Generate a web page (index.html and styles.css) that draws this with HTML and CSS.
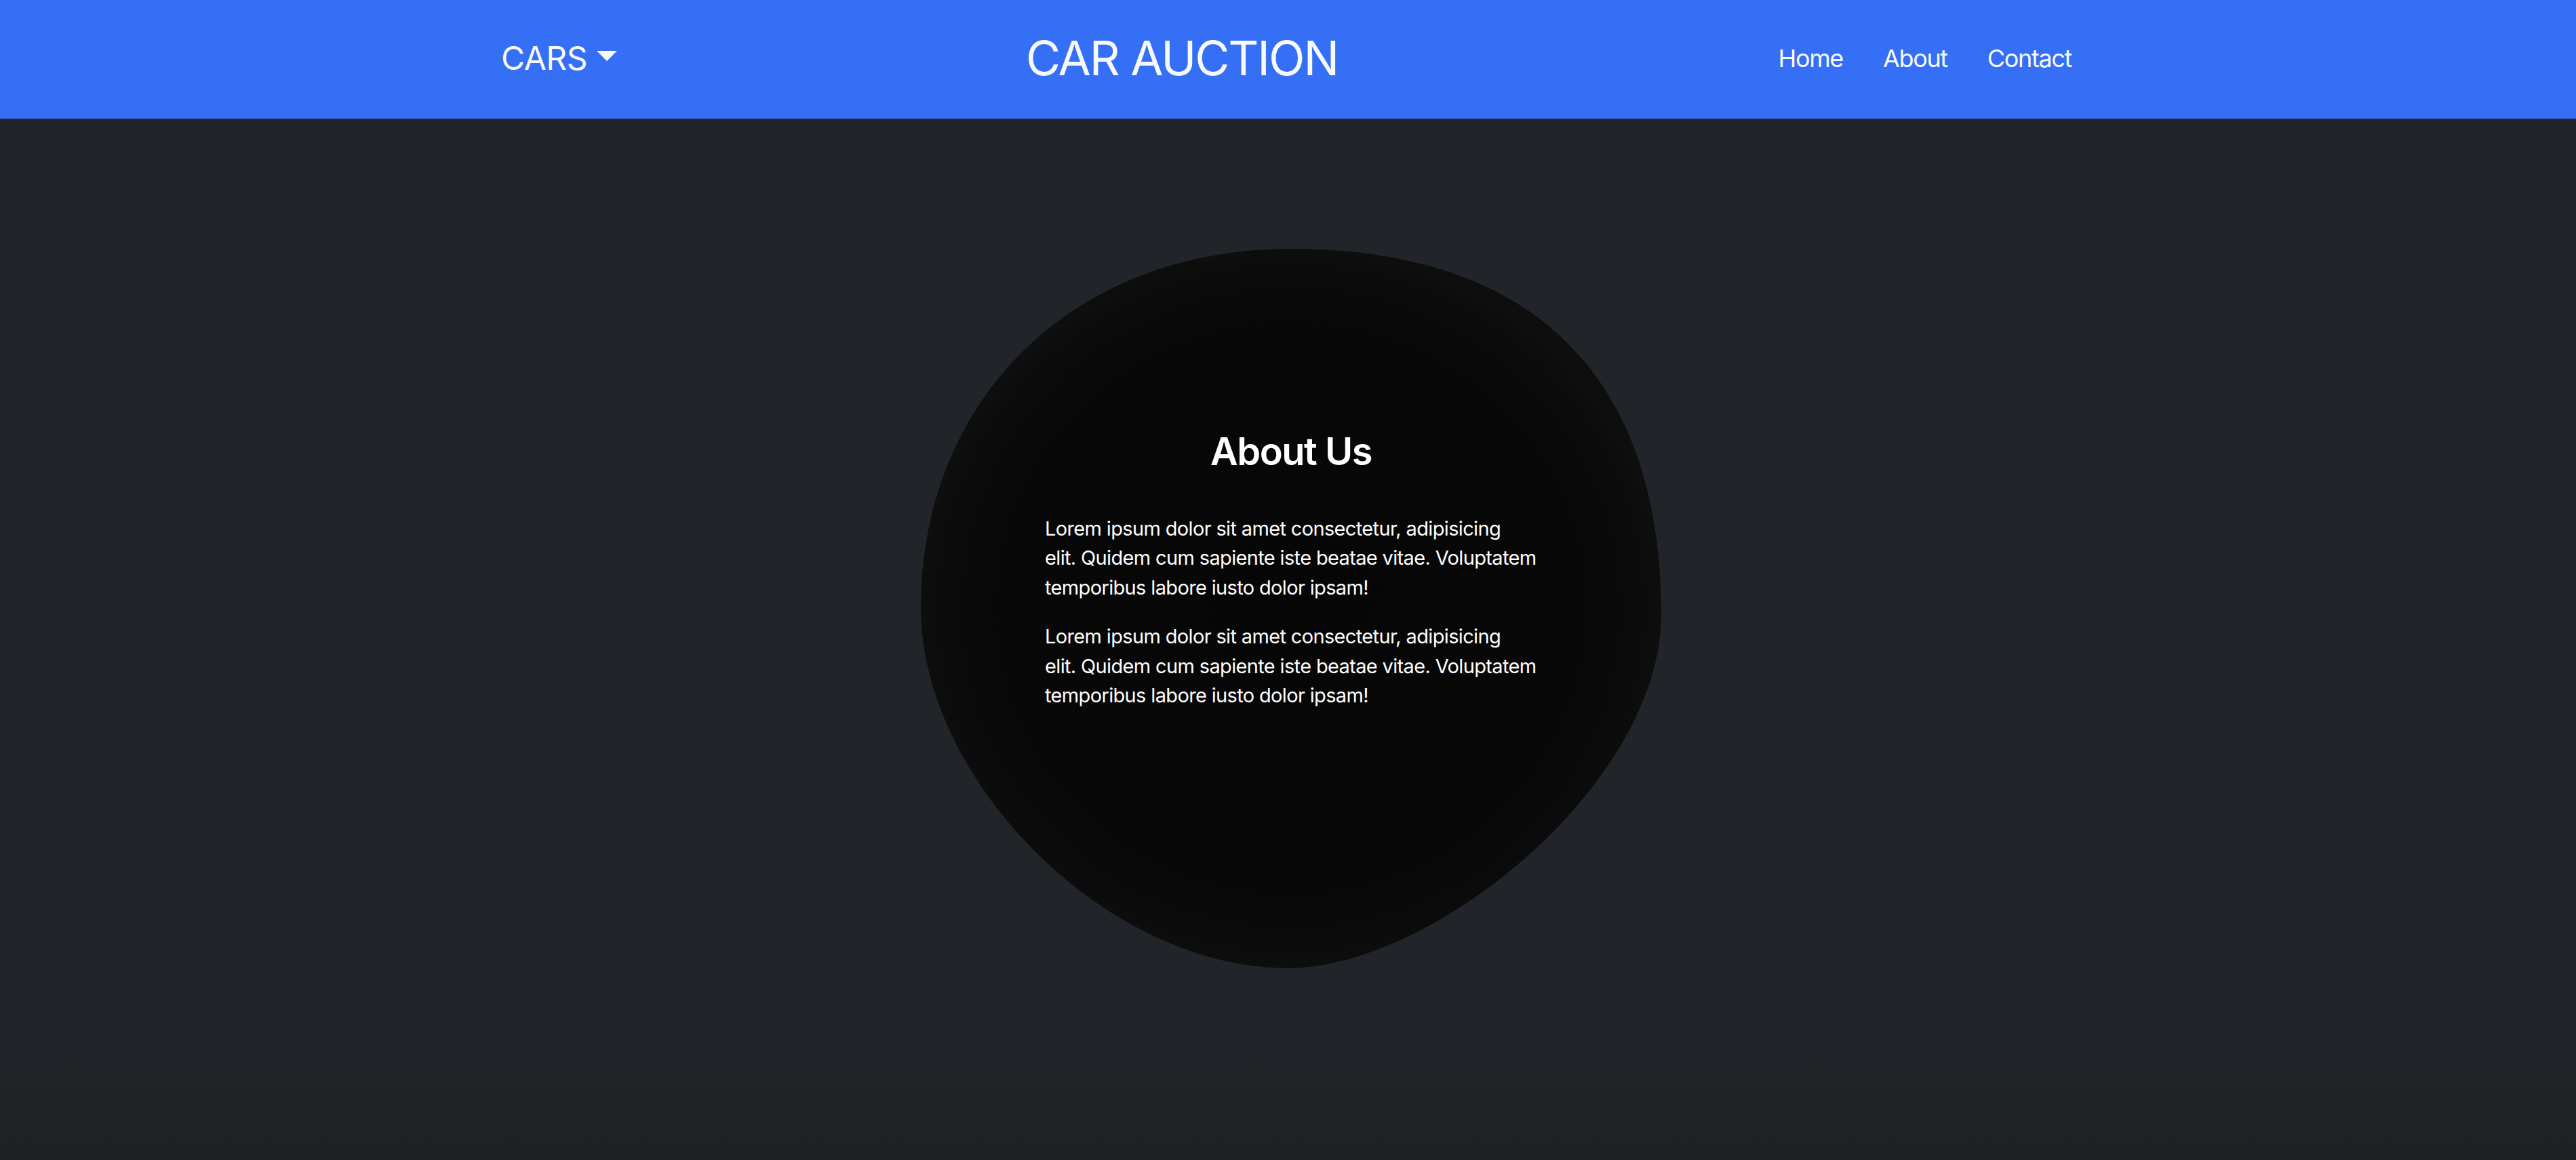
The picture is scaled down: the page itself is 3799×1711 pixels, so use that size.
FILE: index.html
```html
<!DOCTYPE html>
<html lang="en">
<head>
<meta charset="utf-8">
<title>Car Auction - About</title>
<link rel="stylesheet" href="styles.css">
</head>
<body>
<header class="navbar">
  <div class="nav-inner">
    <a class="brand" href="#">CARS<span class="caret"></span></a>
    <h1 class="title">CAR AUCTION</h1>
    <nav class="links">
      <a class="nav-link" href="#">Home</a>
      <a class="nav-link" href="#">About</a>
      <a class="nav-link" href="#">Contact</a>
    </nav>
  </div>
</header>
<main class="page">
  <section class="blob">
    <svg class="blob-bg" viewBox="0 0 1092 1061" preserveAspectRatio="none" aria-hidden="true">
      <defs>
        <radialGradient id="blobFill" cx="0.5" cy="0.5" r="0.5">
          <stop offset="0" stop-color="#060606"/>
          <stop offset="0.78" stop-color="#080808"/>
          <stop offset="0.94" stop-color="#0b0b0b"/>
          <stop offset="1" stop-color="#0e0e0f"/>
        </radialGradient>
      </defs>
      <path fill="url(#blobFill)" d="M545,0 C915,0 1092,200 1092,540 C1092,785 760,1061 540,1061 C275,1061 0,785 0,530 C0,221 225,0 545,0 Z"/>
    </svg>
    <div class="content">
      <h2 class="heading">About Us</h2>
      <p class="text">Lorem ipsum dolor sit amet consectetur, adipisicing<br>elit. Quidem cum sapiente iste beatae vitae. Voluptatem<br>temporibus labore iusto dolor ipsam!</p>
      <p class="text">Lorem ipsum dolor sit amet consectetur, adipisicing<br>elit. Quidem cum sapiente iste beatae vitae. Voluptatem<br>temporibus labore iusto dolor ipsam!</p>
    </div>
  </section>
</main>
</body>
</html>
```
FILE: styles.css
```css
html, body {
  margin: 0;
  padding: 0;
}
body {
  background: #212529;
  font-family: Inter, "Noto Sans", "Liberation Sans", sans-serif;
  color: #fff;
  height: 1711px;
  overflow: hidden;
}
.navbar {
  height: 175px;
  background: #346ff5;
  display: flex;
  align-items: center;
  box-sizing: border-box;
  padding-bottom: 4px;
}
.nav-inner {
  width: 2321px;
  box-sizing: border-box;
  padding-right: 5px;
  margin: 0 auto;
  display: flex;
  align-items: center;
}
.brand {
  display: flex;
  align-items: center;
  color: #f8f9fa;
  text-decoration: none;
  font-size: 48px;
  letter-spacing: -0.5px;
  line-height: 1.2;
}
.caret {
  display: inline-block;
  width: 0;
  height: 0;
  margin-left: 14px;
  margin-top: -6px;
  border-top: 15px solid #f8f9fa;
  border-left: 15px solid transparent;
  border-right: 15px solid transparent;
}
.title {
  margin: 0 0 0 603px;
  font-size: 70px;
  font-weight: 400;
  letter-spacing: -2.1px;
  color: #f8f9fa;
  line-height: 1.2;
}
.links {
  margin-left: auto;
  display: flex;
  gap: 59px;
}
.nav-link {
  color: #f8f9fa;
  text-decoration: none;
  font-size: 36px;
  letter-spacing: -1.35px;
  line-height: 1.5;
}
.page {
  height: 1536px;
  padding: 192px 0 0 9px;
  box-sizing: border-box;
  background: linear-gradient(to bottom, #212529 0, #212529 88%, #1f2023 100%);
}
.blob {
  position: relative;
  width: 1092px;
  height: 1061px;
  margin: 0 auto;
}
.blob-bg {
  position: absolute;
  left: 0;
  top: 0;
  width: 100%;
  height: 100%;
}
.content {
  position: relative;
  width: 726px;
  padding: 265px 0 0 183px;
}
.heading {
  margin: 0 0 56px;
  text-align: center;
  font-size: 56px;
  font-weight: 600;
  letter-spacing: -1.5px;
  line-height: 69.6px;
}
.text {
  margin: 0 0 29px;
  font-size: 29px;
  line-height: 43.5px;
  white-space: nowrap;
  letter-spacing: -0.65px;
}
```
